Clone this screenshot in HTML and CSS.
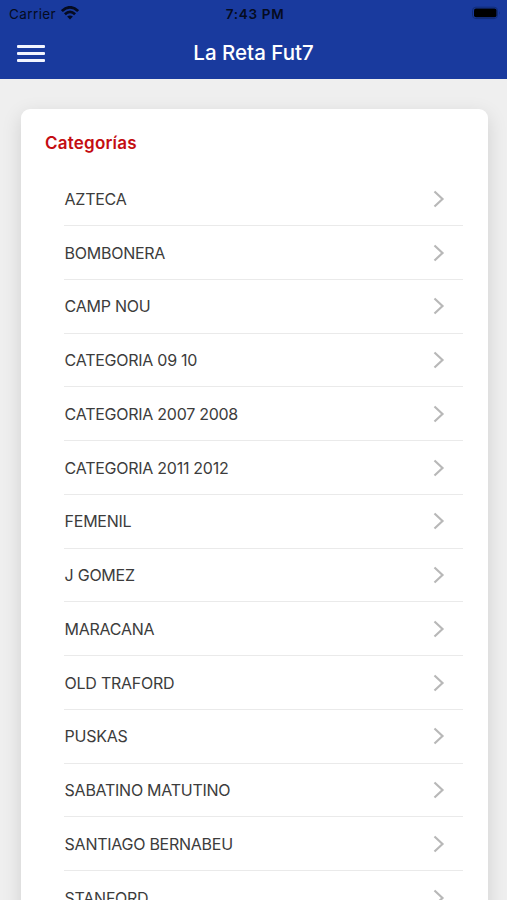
FILE: index.html
```html
<!DOCTYPE html>
<html lang="es">
<head>
<meta charset="utf-8">
<title>La Reta Fut7</title>
<link rel="stylesheet" href="styles.css">
</head>
<body>
<header class="header">
  <div class="status">
    <div class="carrier"><span>Carrier</span>
      <svg class="wifi" width="18" height="14" viewBox="0 0 18 14" fill="none" stroke="currentColor" stroke-width="2.7"><path d="M.9 5.1Q9-2.5 17.1 5.1M3.9 8.2Q9 3.4 14.1 8.2"/><path d="M9 13.5L6.1 10.6Q9 8.2 11.9 10.6Z" fill="currentColor" stroke="none"/></svg>
    </div>
    <time class="time">7:43 PM</time>
    <div class="battery-box"><svg width="30" height="14" viewBox="0 0 30 14"><rect x="1.5" y="1.2" width="25" height="11.4" rx="3.4" fill="none" stroke="#112c75"/><rect x="3" y="2.5" width="22.5" height="8.8" rx="2" fill="#000"/><path d="M28 5.2q1.5 1.7 0 3.5z" fill="#112c75"/></svg></div>
  </div>
  <div class="nav">
    <button class="menu" aria-label="Menú"><span></span><span></span><span></span></button>
    <h1 class="title">La Reta Fut7</h1>
  </div>
</header>
<main class="card">
  <h2 class="heading">Categorías</h2>
  <ul class="list" id="list"></ul>
</main>
<script src="app.js"></script>
</body>
</html>
```
FILE: styles.css
```css
* { box-sizing: border-box; }
body {
  margin: 0;
  height: 900px;
  overflow: hidden;
  background: #efefef;
  font-family: Inter, "Liberation Sans", sans-serif;
}
.header { height: 79px; background: #193a9e; }
.status {
  height: 27px;
  display: grid;
  grid-template-columns: 1fr auto 1fr;
  padding: 0 6px 0 9px;
  font-size: 13.5px;
  line-height: 28px;
  color: #050b20;
}
.carrier { display: flex; letter-spacing: 0.4px; }
.wifi { margin: 6px 0 0 5px; }
.time { font-weight: 600; letter-spacing: 0.7px; }
.battery-box { display: flex; justify-content: flex-end; padding-top: 6px; }
.nav {
  height: 52px;
  display: grid;
  grid-template-columns: 62px 1fr 62px;
  align-items: center;
}
.menu {
  width: 28px;
  height: 17px;
  margin-left: 17px;
  padding: 0;
  border: 0;
  background: none;
  display: flex;
  flex-direction: column;
  justify-content: space-between;
}
.menu span { width: 28px; height: 3px; border-radius: 1px; background: #f2f5ff; }
.title {
  margin: 0;
  font-size: 20.5px;
  font-weight: 500;
  line-height: 52px;
  text-align: center;
  color: #fff;
}
.card {
  height: 830px;
  margin: 29.5px 19.5px 0 20.5px;
  padding: 21.5px 24.5px 0;
  border-radius: 9px;
  background: #fff;
  box-shadow: 0 6px 20px rgba(0, 0, 0, 0.13);
}
.heading {
  margin: 0 0 16.4px;
  font-size: 17px;
  font-weight: 600;
  line-height: 26px;
  letter-spacing: 0.22px;
  color: #c40d12;
}
.list { margin: 0; padding: 0 0 0 19px; list-style: none; }
.item {
  height: 53.75px;
  padding: 0 18.5px 0 0.6px;
  display: flex;
  justify-content: space-between;
  align-items: center;
  border-bottom: 1px solid #eaeaea;
  font-size: 16px;
  letter-spacing: -0.26px;
  color: #3c3c3c;
}
.chevron { fill: none; stroke: #b8b8b8; stroke-width: 2.2; }
```
FILE: app.js
```js
const categories = [
  "AZTECA", "BOMBONERA", "CAMP NOU", "CATEGORIA 09 10", "CATEGORIA 2007 2008",
  "CATEGORIA 2011 2012", "FEMENIL", "J GOMEZ", "MARACANA", "OLD TRAFORD",
  "PUSKAS", "SABATINO MATUTINO", "SANTIAGO BERNABEU", "STANFORD"
];
document.getElementById("list").innerHTML = categories.map(name =>
  `<li class="item"><span>${name}</span><svg class="chevron" width="12" height="18" viewBox="0 0 12 18"><path d="M1.5 1.5L9.5 9L1.5 16.5"/></svg></li>`
).join("");
```
